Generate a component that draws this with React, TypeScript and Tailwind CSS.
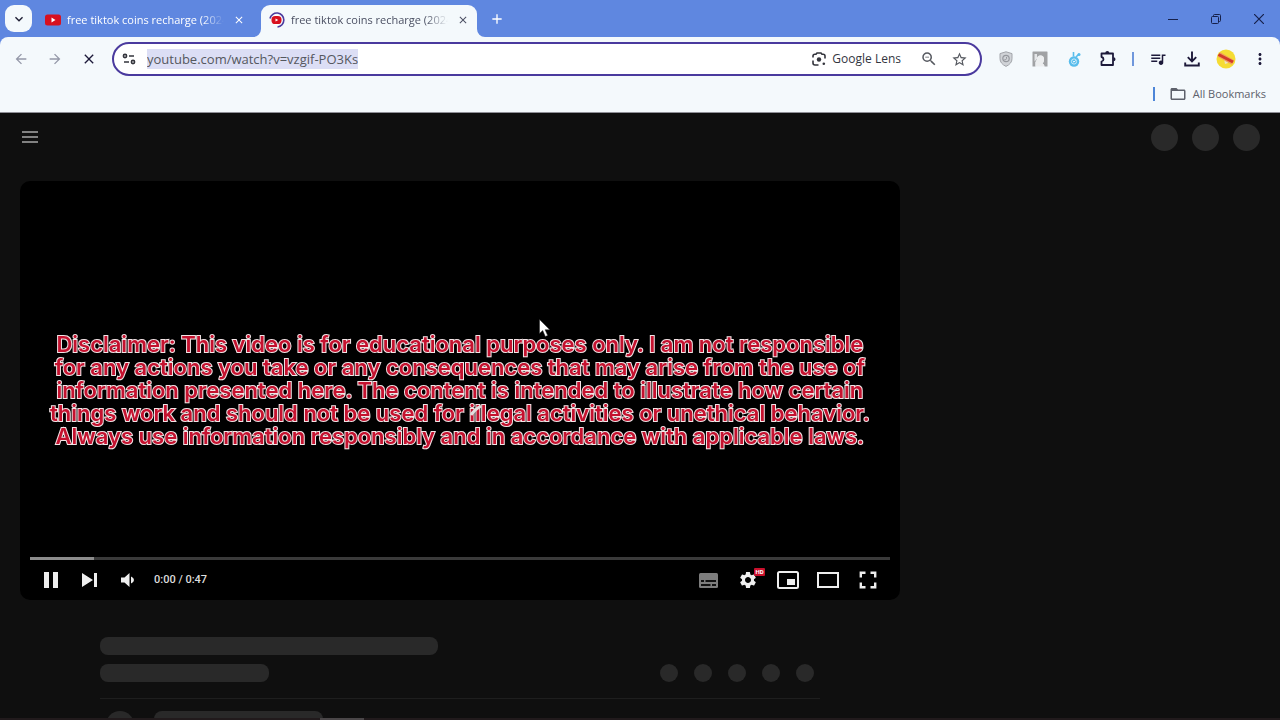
import React from 'react';
import {
  MdArrowBack, MdArrowForward, MdClose, MdAdd, MdKeyboardArrowDown, MdStarBorder,
  MdZoomOut, MdQueueMusic, MdMoreVert, MdSettings, MdFolderOpen,
} from 'react-icons/md';

const TAB_TITLE = 'free tiktok coins recharge (2024';

const DISCLAIMER = [
  'Disclaimer: This video is for educational purposes only. I am not responsible',
  'for any actions you take or any consequences that may arise from the use of',
  'information presented here. The content is intended to illustrate how certain',
  'things work and should not be used for illegal activities or unethical behavior.',
  'Always use information responsibly and in accordance with applicable laws.',
];

const YoutubeIcon = () => (
  <svg viewBox="0 0 16 16" className="w-4 h-4 shrink-0">
    <rect x="0" y="2.5" width="16" height="11" rx="2.5" fill="#d8101f" />
    <path d="M6.5 5.6v4.8l4-2.4z" fill="#fff" />
  </svg>
);

const LoadingIcon = () => (
  <svg viewBox="0 0 16 16" className="w-4 h-4 shrink-0">
    <path d="M1 6.5A7 7 0 1 1 8.5 15" fill="none" stroke="#4b3a9e" strokeWidth="1.6" />
    <circle cx="7.5" cy="8" r="5" fill="#fff" />
    <rect x="2.5" y="4" width="10" height="8" rx="3.6" fill="#d8101f" />
    <path d="M6.5 6.4v3.2l2.8-1.6z" fill="#fff" />
  </svg>
);

const TabFoot = ({ flip = false }: { flip?: boolean }) => (
  <svg viewBox="0 0 8 8" className={flip ? 'w-2 h-2 self-end -scale-x-100' : 'w-2 h-2 self-end'}>
    <path d="M8 0v8H0a8 8 0 0 0 8-8z" fill="#f4f9fc" />
  </svg>
);

const Tab = ({ active = false, icon }: { active?: boolean; icon: React.ReactNode }) => (
  <div
    className={`w-[216px] self-end h-8 flex items-center gap-1.5 pl-2 pr-[5px] pb-[3px] ${active ? 'bg-[#f4f9fc] rounded-t-[9px] text-[#4b5063]' : 'text-white'}`}
  >
    {icon}
    <span className="flex-1 overflow-hidden whitespace-nowrap text-[11px] leading-4 [mask-image:linear-gradient(to_right,black_86%,transparent_100%)]">
      {TAB_TITLE}
    </span>
    <button aria-label="Close tab" className="w-[18px] h-[18px] flex items-center justify-center">
      <MdClose className="w-3 h-3" />
    </button>
  </div>
);

const ToolButton = ({ label, children }: { label: string; children: React.ReactNode }) => (
  <button aria-label={label} className="w-[34px] h-[34px] shrink-0 flex items-center justify-center">
    {children}
  </button>
);

const PlayerButton = ({ label, children }: { label: string; children: React.ReactNode }) => (
  <button aria-label={label} className="relative flex-1 h-10 flex items-center justify-center text-[#eeeeee]">
    {children}
  </button>
);

const TitleBar = () => (
  <div className="h-[37px] flex items-center bg-[#5f87e0]">
    <button aria-label="Search tabs" className="mx-[5px] w-[27px] h-[27px] rounded-[9px] bg-[#f4f9fc] flex items-center justify-center text-[#1d1d33]">
      <MdKeyboardArrowDown className="w-4 h-4" />
    </button>
    <Tab icon={<YoutubeIcon />} />
    <TabFoot />
    <Tab active icon={<LoadingIcon />} />
    <TabFoot flip />
    <button aria-label="New tab" className="w-6 h-6 flex items-center justify-center text-white">
      <MdAdd className="w-4 h-4" />
    </button>
    <div className="ml-auto flex text-[#16204a]">
      <button aria-label="Minimize" className="w-[43px] h-9 flex items-center justify-center">
        <svg viewBox="0 0 10 10" className="w-2.5 h-2.5"><path d="M0 5.5h10" stroke="currentColor" /></svg>
      </button>
      <button aria-label="Restore" className="w-[43px] h-9 flex items-center justify-center">
        <svg viewBox="0 0 10 10" className="w-2.5 h-2.5" fill="none" stroke="currentColor">
          <rect x=".5" y="2.5" width="7" height="7" rx="1" />
          <path d="M2.5 2.5v-1q0-1 1-1h5q1 0 1 1v5q0 1-1 1h-1" />
        </svg>
      </button>
      <button aria-label="Close" className="w-[43px] h-9 flex items-center justify-center">
        <svg viewBox="0 0 10 10" className="w-2.5 h-2.5"><path d="M0 0l10 10M10 0L0 10" stroke="currentColor" strokeWidth="1.2" /></svg>
      </button>
    </div>
  </div>
);

const Omnibox = () => (
  <div className="ml-1.5 mr-[7px] flex-1 h-[34px] flex items-center rounded-full border-2 border-[#4a3a9e] bg-white text-[#55585f]">
    <svg viewBox="0 0 14 12" className="ml-2 w-3.5 h-3 shrink-0" fill="none" stroke="#33343c" strokeWidth="1.6">
      <circle cx="3" cy="3" r="1.6" />
      <path d="M7 3h5M2 9h5" />
      <circle cx="11" cy="9" r="1.6" />
    </svg>
    <input
      aria-label="Address"
      defaultValue="youtube.com/watch?v=vzgif-PO3Ks"
      className="ml-[11px] [field-sizing:content] h-5 text-[13px] leading-5 bg-[#dcdef5] text-[#55585f] outline-none"
    />
    <button className="ml-auto pr-[13px] flex items-center gap-1.5 text-[12px] leading-4 font-medium text-[#33363f]">
      <svg viewBox="0 0 14 14" className="w-3.5 h-3.5" fill="none" stroke="#33343c" strokeWidth="1.6">
        <path d="M1 5.5V4q0-1.8 1.8-1.8H4L5 1h4l1 1.2h1.2Q13 2.2 13 4v2.5M1 8.5V11q0 2 2 2h3.5" />
        <circle cx="7" cy="7.5" r="2.2" fill="#33343c" stroke="none" />
        <circle cx="11.8" cy="11.8" r="1.3" fill="#33343c" stroke="none" />
      </svg>
      Google Lens
    </button>
    <button aria-label="Zoom" className="w-[30px] h-[30px] flex items-center justify-center">
      <MdZoomOut className="w-[18px] h-[18px]" />
    </button>
    <button aria-label="Bookmark this tab" className="mr-1.5 w-[30px] h-[30px] flex items-center justify-center">
      <MdStarBorder className="w-[17px] h-[17px]" />
    </button>
  </div>
);

const Toolbar = () => (
  <div className="bg-[#5f87e0]">
    <div className="bg-[#f4f9fc] rounded-t-lg border-b border-[#8f8f97] pb-1.5">
      <div className="h-11 flex items-center pl-1 pr-[3px] text-[#1d1a3a]">
        <ToolButton label="Back"><MdArrowBack className="w-4 h-4 text-[#9498a8]" /></ToolButton>
        <ToolButton label="Forward"><MdArrowForward className="w-4 h-4 text-[#9498a8]" /></ToolButton>
        <ToolButton label="Stop"><MdClose className="w-4 h-4" /></ToolButton>
        <Omnibox />
        <ToolButton label="Ad blocker">
          <svg viewBox="0 0 14 16" className="w-3.5 h-4">
            <path d="M7 .8l6 1.8v5q0 5-6 7.800-6-2.800-6-7.800v-5z" fill="#d0d3d7" stroke="#a2a5aa" />
            <circle cx="7" cy="7.5" r="3.2" fill="none" stroke="#95989e" strokeWidth="1.2" />
            <path d="M5.500 8.500q1.500.8 2-.8V6" fill="none" stroke="#95989e" />
          </svg>
        </ToolButton>
        <ToolButton label="Extension">
          <svg viewBox="0 0 16 16" className="w-4 h-4">
            <path d="M1 .5h14q.5 0 .5.5v14.500H12.500q0-2-2-3 1.500-1.500 1.500-4 0-4-3.500-4T5 8.500L3.500 11v4.500h-3V1q0-.5.5-.5z" fill="#a0a2a4" />
            <path d="M2.500 3v7.500L5 8V3z" fill="#e4e6e8" />
            <path d="M8.500 4.500Q12 4.500 12 8.500q0 2.500-1.500 4 2 1 2 3h-9V11L5 8.500q0-4 3.500-4z" fill="#eceeef" />
          </svg>
        </ToolButton>
        <ToolButton label="Downloader">
          <svg viewBox="0 0 16 16" className="w-4 h-4">
            <circle cx="8" cy="10.5" r="5.2" fill="#58bdec" />
            <circle cx="8" cy="10.5" r="2.6" fill="none" stroke="#c9eafa" />
            <path d="M6.800 10l1.200 1.200L9.500 9.500" fill="none" stroke="#fff" />
            <path d="M7.500 5.500V1M10 6l3-3" stroke="#58bdec" strokeWidth="1.600" />
            <circle cx="13" cy="3.5" r="1.500" fill="#58bdec" />
          </svg>
        </ToolButton>
        <ToolButton label="Extensions">
          <svg viewBox="0 0 16 16" className="w-4 h-4">
            <path d="M1.500 2.500h11.500v11.500H1.500v-3.500q2-.5 2-2.300t-2-2.200z" fill="none" stroke="currentColor" strokeWidth="1.800" strokeLinejoin="round" />
            <path d="M5.300 2a2 2 0 0 1 4 0zM13.500 6.200a2 2 0 0 1 0 4z" fill="currentColor" />
          </svg>
        </ToolButton>
        <div className="w-4 flex justify-center"><span className="w-0.5 h-3.5 bg-[#6f97dc]" /></div>
        <ToolButton label="Media controls"><MdQueueMusic className="w-[18px] h-[18px]" /></ToolButton>
        <ToolButton label="Downloads">
          <svg viewBox="0 0 16 16" className="w-4 h-4" fill="none" stroke="currentColor" strokeWidth="1.9">
            <path d="M8 .5v9.500M3.800 6.200L8 10.400l4.200-4.200M1.200 11.500v3h13.600v-3" />
          </svg>
        </ToolButton>
        <ToolButton label="Profile">
          <svg viewBox="0 0 20 20" className="w-5 h-5">
            <circle cx="10" cy="10" r="9.5" fill="#f5dc33" />
            <path d="M8 10l1 5 3-1 .5-3z" fill="#ece4c0" />
            <path d="M3 5.500l14 8" stroke="#f0a05a" strokeWidth="5" />
            <path d="M2.500 5.500l14.500 7.500" stroke="#d23a2a" strokeWidth="3" />
          </svg>
        </ToolButton>
        <ToolButton label="Menu"><MdMoreVert className="w-[18px] h-[18px]" /></ToolButton>
      </div>
      <div className="h-[25px] flex items-center justify-end pr-3.5">
        <span className="w-0.5 h-3.5 bg-[#4d86d8] mr-3.5" />
        <button className="flex items-center gap-1.5 text-[11px] leading-4 text-[#5d616b]">
          <MdFolderOpen className="w-[18px] h-[18px]" />
          All Bookmarks
        </button>
      </div>
    </div>
  </div>
);

const Player = () => (
  <div className="relative aspect-[21/10] flex flex-col justify-end rounded-[10px] bg-black px-2.5 overflow-hidden">
    <div className="absolute inset-0 flex items-center justify-center">
      <p className="text-center whitespace-nowrap text-[22px] leading-[23px] font-semibold text-[#c4122f] [-webkit-text-stroke:2px_#f3e4e6] [paint-order:stroke_fill] will-change-transform font-['Inter',sans-serif]">
        {DISCLAIMER.map((line) => (
          <span key={line} className="block">{line}</span>
        ))}
      </p>
    </div>
    <svg viewBox="0 0 14 14" className="absolute left-[51%] top-[53%] w-3.5 h-3.5">
      <path d="M2 12q3-5 10-9" fill="none" stroke="#e2dede" strokeWidth="3" />
    </svg>
    <svg viewBox="0 0 12 19" className="absolute left-[59%] top-[33%] w-3 h-[19px]">
      <path d="M.5.5v14l3.200-3 2.600 6 2.400-1-2.600-5.700h4.700z" fill="#fff" stroke="#222" strokeWidth=".5" />
    </svg>

    <div className="relative h-[3px] bg-[#3a3a3a]">
      <div className="h-full w-[7.4%] bg-[#8c8c8c]" />
    </div>
    <div className="relative h-10 flex items-center justify-between px-0.5">
      <div className="flex items-center">
        <div className="flex w-[114px]">
          <PlayerButton label="Pause">
            <svg viewBox="0 0 14 16" className="w-3.5 h-4" fill="currentColor"><path d="M0 0h5v16H0zM9 0h5v16H9z" /></svg>
          </PlayerButton>
          <PlayerButton label="Next">
            <svg viewBox="0 0 15 14" className="w-[15px] h-3.5" fill="currentColor"><path d="M0 0l11 7-11 7zM12 0h3v14h-3z" /></svg>
          </PlayerButton>
          <PlayerButton label="Mute">
            <svg viewBox="0 0 13 14" className="w-[13px] h-3.5" fill="currentColor"><path d="M0 4.500h3.500L8.500 0v14L3.500 9.500H0zM10 3.500q3 1.200 3 3.500t-3 3.500z" /></svg>
          </PlayerButton>
        </div>
        <span className="ml-2 text-[11px] leading-4 font-medium text-[#dddddd] font-['Roboto',sans-serif]">0:00 / 0:47</span>
      </div>
      <div className="flex w-[200px]">
        <PlayerButton label="Subtitles">
          <svg viewBox="0 0 19 15" className="w-[19px] h-[15px]">
            <rect width="19" height="15" rx="1.5" fill="#7d7d7d" />
            <path d="M2 8h3M6.500 8H17M2 12h9.500M13 12h4" stroke="#111" strokeWidth="2" />
          </svg>
        </PlayerButton>
        <PlayerButton label="Settings">
          <MdSettings className="w-5 h-5" />
          <span className="absolute left-[26px] top-2 w-[11px] h-2 rounded-[1px] bg-[#c9102c] text-white text-[6px] leading-[8px] font-bold text-center font-['Roboto',sans-serif]">HD</span>
        </PlayerButton>
        <PlayerButton label="Miniplayer">
          <svg viewBox="0 0 22 18" className="w-[22px] h-[18px]">
            <rect x="1" y="1" width="20" height="16" rx="1.5" fill="none" stroke="currentColor" strokeWidth="2" />
            <path d="M10 8h8v6h-8z" fill="currentColor" />
          </svg>
        </PlayerButton>
        <PlayerButton label="Theater mode">
          <svg viewBox="0 0 22 16" className="w-[22px] h-4"><rect x="1" y="1" width="20" height="14" fill="none" stroke="currentColor" strokeWidth="2" /></svg>
        </PlayerButton>
        <PlayerButton label="Full screen">
          <svg viewBox="0 0 18 18" className="w-[18px] h-[18px]" fill="none" stroke="currentColor" strokeWidth="2.4">
            <path d="M6.500 1.800H1.800v4.700M11.500 1.800h4.700v4.700M6.500 16.200H1.800v-4.700M11.500 16.200h4.700v-4.700" />
          </svg>
        </PlayerButton>
      </div>
    </div>
  </div>
);

const Skeleton = () => (
  <div className="px-20 pt-[37px]">
    <div className="h-[18px] w-[47%] rounded-lg bg-[#292929]" />
    <div className="mt-[9px] flex justify-between">
      <div className="h-[18px] w-[169px] rounded-lg bg-[#292929]" />
      <div className="flex gap-4 pr-1.5">
        {[0, 1, 2, 3, 4].map((i) => (
          <span key={i} className="w-[18px] h-[18px] rounded-full bg-[#292929]" />
        ))}
      </div>
    </div>
    <div className="mt-4 border-t border-[#1e1e1e] pt-3 px-1.5 flex gap-5">
      <div className="w-7 h-7 rounded-full bg-[#292929]" />
      <div className="h-[18px] w-[169px] rounded-lg bg-[#292929]" />
    </div>
  </div>
);

export default function App() {
  return (
    <div className="h-screen overflow-hidden flex flex-col bg-[#0f0f0f] font-['Open_Sans',sans-serif]">
      <TitleBar />
      <Toolbar />
      <main className="relative flex-1 min-h-0 overflow-hidden">
        <header className="h-12 flex items-center justify-between px-5">
          <button aria-label="Guide" className="w-5 h-5 flex items-center justify-center">
            <svg viewBox="0 0 16 12" className="w-4 h-3"><path d="M0 1h16M0 6h16M0 11h16" stroke="#a8a8a8" strokeWidth="1.4" /></svg>
          </button>
          <div className="flex gap-3.5">
            <span className="w-[27px] h-[27px] rounded-full bg-[#292929]" />
            <span className="w-[27px] h-[27px] rounded-full bg-[#292929]" />
            <span className="w-[27px] h-[27px] rounded-full bg-[#292929]" />
          </div>
        </header>
        <div className="flex pt-5 pl-5">
          <div className="flex-1 min-w-0">
            <Player />
            <Skeleton />
          </div>
          <aside className="w-[380px] shrink-0" />
        </div>
        <div className="absolute inset-x-0 bottom-0 h-0.5 bg-[#211a1c]">
          <div className="ml-[25%] w-11 h-full bg-[#4a4648]" />
        </div>
      </main>
    </div>
  );
}
